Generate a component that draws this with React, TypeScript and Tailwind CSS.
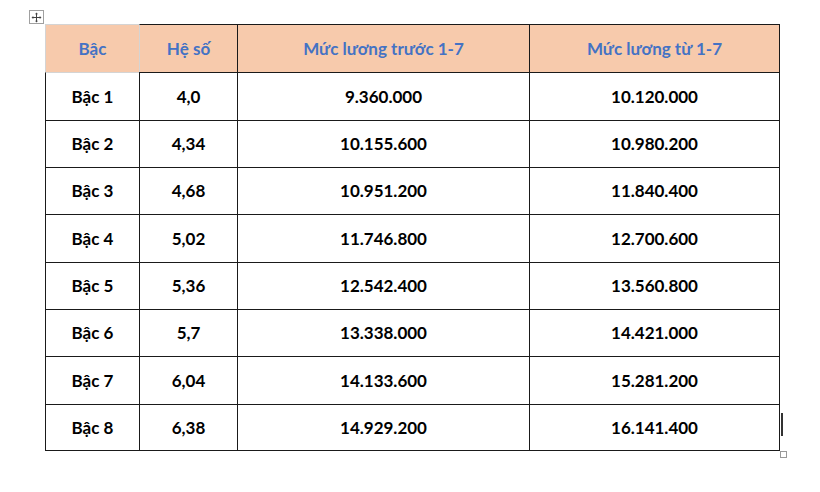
import React from "react";

const rows = [
  ["Bậc 1", "4,0", "9.360.000", "10.120.000"],
  ["Bậc 2", "4,34", "10.155.600", "10.980.200"],
  ["Bậc 3", "4,68", "10.951.200", "11.840.400"],
  ["Bậc 4", "5,02", "11.746.800", "12.700.600"],
  ["Bậc 5", "5,36", "12.542.400", "13.560.800"],
  ["Bậc 6", "5,7", "13.338.000", "14.421.000"],
  ["Bậc 7", "6,04", "14.133.600", "15.281.200"],
  ["Bậc 8", "6,38", "14.929.200", "16.141.400"],
];

const heights = ["h-[48px]", "h-[47px]", "h-[47px]", "h-[48px]", "h-[47px]", "h-[47px]", "h-[48px]", "h-[46px]"];
const widths = ["w-[94px]", "w-[98px]", "w-[292px]", "w-[250px]"];

export default function App() {
  return (
    <div
      className="relative w-[820px] h-[492px] bg-white overflow-hidden"
      style={{ fontFamily: "Lato, 'Liberation Sans', sans-serif" }}
    >
      {/* table move handle */}
      <div className="absolute left-[29px] top-[10px] w-[15px] h-[14px] border border-[#a0a0a0] bg-white flex items-center justify-center">
        <svg width="11" height="11" viewBox="0 0 11 11">
          <path d="M5.5 1v9M1 5.5h9" stroke="#444" strokeWidth="1" />
          <path d="M5.5 0.5l-1.5 1.8h3z M5.5 10.5l-1.5-1.8h3z M0.5 5.5l1.8-1.5v3z M10.5 5.5l-1.8-1.5v3z" fill="#444" />
        </svg>
      </div>

      <div className="pt-[24px] pl-[45px]">
        <div className="w-[735px] border-r border-b border-[#1a1a1a] font-bold text-[17px]">
          {/* header */}
          <div className="flex h-[48px] bg-[#F7CAAC] text-[#4472C4]">
            <div className={`${widths[0]} border-t border-l border-[#d4d4d4] flex items-center justify-center`}>Bậc</div>
            <div className={`${widths[1]} border-t border-l border-t-[#1a1a1a] border-l-[#d4d4d4] flex items-center justify-center`}>Hệ số</div>
            <div className={`${widths[2]} border-t border-l border-[#1a1a1a] flex items-center justify-center`}>Mức lương trước 1-7</div>
            <div className={`${widths[3]} border-t border-l border-[#1a1a1a] flex items-center justify-center`}>Mức lương từ 1-7</div>
          </div>
          {rows.map((r, i) => (
            <div key={i} className={`flex ${heights[i]} text-black`}>
              {r.map((c, j) => (
                <div
                  key={j}
                  className={`${widths[j]} border-t border-l ${i === 0 && j === 0 ? "border-t-[#d4d4d4] border-l-[#1a1a1a]" : "border-[#1a1a1a]"} flex items-center justify-center`}
                >
                  {c}
                </div>
              ))}
            </div>
          ))}
        </div>
      </div>

      {/* text cursor */}
      <div className="absolute left-[781px] top-[413px] w-[2px] h-[23px] bg-[#333]" />
      {/* resize handle */}
      <div className="absolute left-[780px] top-[451px] w-[7px] h-[7px] border border-[#999] bg-white" />
    </div>
  );
}
